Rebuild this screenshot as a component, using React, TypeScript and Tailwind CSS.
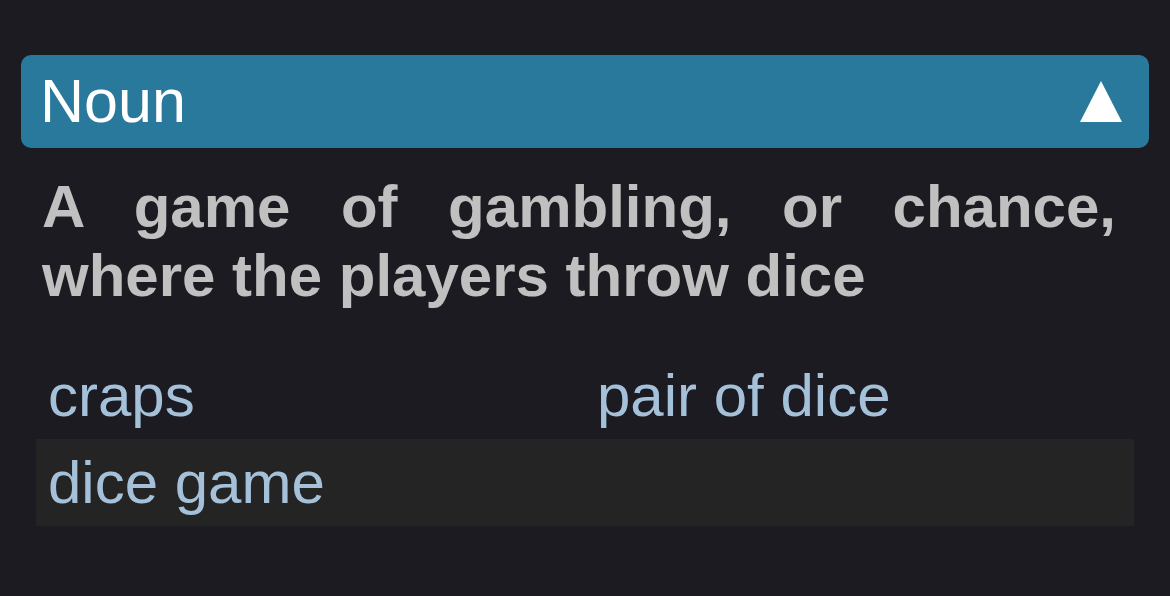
import React from 'react';

const synonyms = [
  ['craps', 'pair of dice'],
  ['dice game', ''],
];

export default function App() {
  return (
    <div className="min-h-screen w-full bg-[#1c1b21] pt-[55px] px-[21px] font-['Liberation_Sans',Arial,sans-serif]">
      {/* Header */}
      <div className="h-[93px] rounded-[10px] bg-[#28799c] flex items-center justify-between pl-[19px] pr-[27px]">
        <span className="text-[61px] leading-none text-white">Noun</span>
        <svg width="42" height="41" viewBox="0 0 42 41" className="mt-[-1px]">
          <polygon points="21,0 42,41 0,41" fill="#ffffff" />
        </svg>
      </div>

      {/* Definition */}
      <p className="mt-6 pl-[21px] pr-[33px] text-[60px] leading-[69px] font-bold text-[#c0c0c0] text-justify">
        A game of gambling, or chance, where the players throw dice
      </p>

      {/* Synonyms */}
      <div className="mt-[42px] mx-[15px]">
        {synonyms.map((row, i) => (
          <div key={i} className={`grid grid-cols-2 py-[9px] ${i % 2 === 1 ? 'bg-[#242424]' : ''}`}>
            {row.map((s, j) => (
              <span key={j} className="px-3 text-[60px] leading-[69px] text-[#a5c1d9]">{s}</span>
            ))}
          </div>
        ))}
      </div>
    </div>
  );
}
